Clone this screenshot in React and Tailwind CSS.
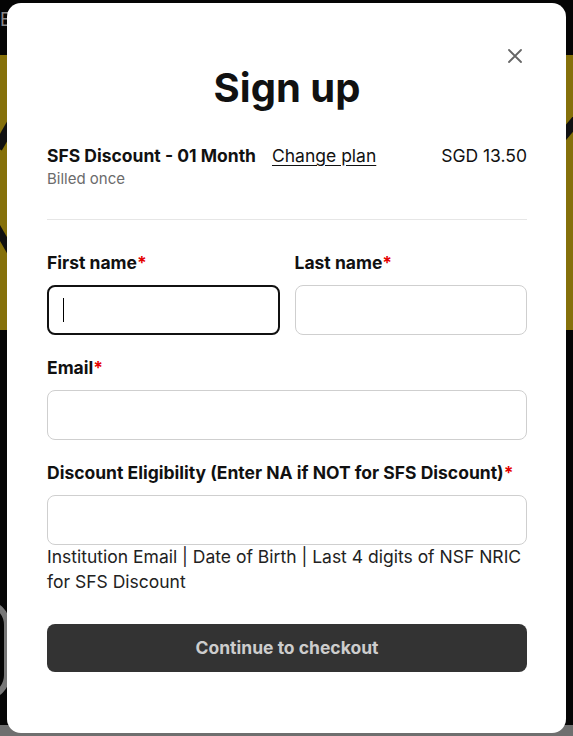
import React from "react";

const font = { fontFamily: "Inter, 'Noto Sans', sans-serif" };

function Label({ children }) {
  return (
    <div className="text-[17.5px] leading-[24px] font-bold text-[#111]">
      {children}
      <span className="text-[#e50000]">*</span>
    </div>
  );
}

function Field({ focused }) {
  return focused ? (
    <div className="h-[50px] rounded-[8px] border-2 border-[#111] bg-white flex items-center pl-[14px]">
      <span className="block w-px h-[24px] bg-black" />
    </div>
  ) : (
    <div className="h-[50px] rounded-[8px] border border-[#cfcfcf] bg-white" />
  );
}

function FormField({ label, focused, children }) {
  return (
    <div className="flex flex-col gap-[10px]">
      <Label>{label}</Label>
      <div>
        <Field focused={focused} />
        {children}
      </div>
    </div>
  );
}

export default function App() {
  return (
    <div className="relative w-[573px] h-[736px] overflow-hidden bg-[#050505]" style={font}>
      {/* backdrop decorations */}
      <div className="absolute left-0 top-[55px] w-full h-[275px] bg-[#85700a]" />
      <div className="absolute left-0 top-[120px] w-[10px] h-[30px] bg-[#111] rotate-[30deg]" />
      <div className="absolute left-0 top-[220px] w-[8px] h-[40px] bg-[#111] rotate-[-30deg]" />
      <div className="absolute right-0 top-[110px] w-[10px] h-[40px] bg-[#111] rotate-[40deg]" />
      <div className="absolute left-[-40px] top-[600px] w-[50px] h-[100px] rounded-full border-[6px] border-[#777]" />
      <div className="absolute left-0 top-[725px] w-full h-[11px] bg-[#6f6f6f]" />
      <div className="absolute left-0 top-[10px] text-[#888] text-[18px] leading-[20px]">E</div>

      <div className="relative pt-[3px] pl-[7px]">
        <div className="relative w-[559px] h-[730px] bg-white rounded-[14px] pl-[40px] pr-[39px] flex flex-col">
          <button className="absolute right-[40px] top-[42px] w-[22px] h-[22px] flex items-center justify-center text-[#666]">
            <svg width="16" height="16" viewBox="0 0 16 16" fill="none" stroke="currentColor" strokeWidth="1.8" strokeLinecap="round">
              <path d="M2 2 L14 14 M14 2 L2 14" />
            </svg>
          </button>

          <h1 className="pt-[59px] text-center text-[40px] leading-[52px] font-bold text-[#111]">
            Sign up
          </h1>

          <div className="mt-[30px] flex flex-col gap-[1px]">
            <div className="flex items-start text-[17.5px] leading-[24px] text-[#111]">
              <div className="font-bold">SFS Discount - 01 Month</div>
              <a className="ml-[16px] underline underline-offset-[3px]">Change plan</a>
              <div className="ml-auto">SGD 13.50</div>
            </div>
            <div className="text-[15px] leading-[20px] text-[#6b6b6b]">Billed once</div>
          </div>

          <div className="mt-[30px] h-px bg-[#e6e6e6]" />

          <div className="mt-[31px] flex flex-col gap-[21px]">
            <div className="grid grid-cols-2 gap-[15px]">
              <FormField label="First name" focused />
              <FormField label="Last name" />
            </div>

            <FormField label="Email" />

            <FormField label="Discount Eligibility (Enter NA if NOT for SFS Discount)">
              <div className="-mt-[1px] text-[17.5px] leading-[25px] text-[#222]">
                Institution Email | Date of Birth | Last 4 digits of NSF NRIC for SFS Discount
              </div>
            </FormField>
          </div>

          <button className="mt-[30px] w-full h-[48px] rounded-[8px] bg-[#333333] text-[#cdcdcd] text-[17.5px] font-bold">
            Continue to checkout
          </button>
        </div>
      </div>
    </div>
  );
}
